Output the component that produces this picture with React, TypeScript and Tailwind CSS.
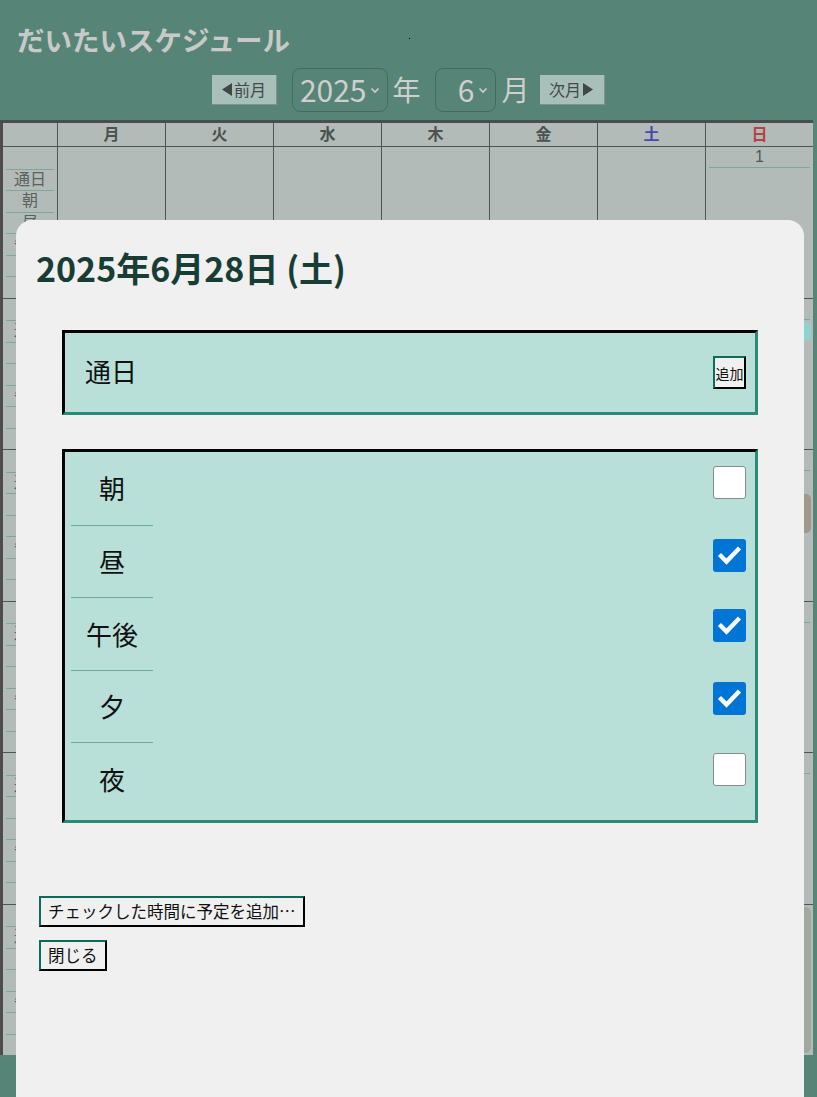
import React from "react";

const weeks: (number | null)[][] = [
  [null, null, null, null, null, null, 1],
  [2, 3, 4, 5, 6, 7, 8],
  [9, 10, 11, 12, 13, 14, 15],
  [16, 17, 18, 19, 20, 21, 22],
  [23, 24, 25, 26, 27, 28, 29],
  [30, null, null, null, null, null, null],
];

const dayNames = [
  { t: "月", c: "text-[#4b524f]" },
  { t: "火", c: "text-[#4b524f]" },
  { t: "水", c: "text-[#4b524f]" },
  { t: "木", c: "text-[#4b524f]" },
  { t: "金", c: "text-[#4b524f]" },
  { t: "土", c: "text-[#4a48b0]" },
  { t: "日", c: "text-[#b04545]" },
];

const slotLabels = ["", "通日", "朝", "昼", "午後", "夕", "夜"];

function Chevron() {
  return (
    <svg width="10" height="7" viewBox="0 0 10 7" className="ml-[3px] mt-[1px]">
      <path d="M1.5 1.5 L5 5 L8.5 1.5" fill="none" stroke="#cfcfcf" strokeWidth="1.6" />
    </svg>
  );
}

function NavButton({ label, dir }: { label: string; dir: "l" | "r" }) {
  const tri = (
    <svg width="12" height="15" viewBox="0 0 12 15">
      {dir === "l" ? <path d="M11 1 L1 7.5 L11 14 Z" fill="#3f4845" /> : <path d="M1 1 L11 7.5 L1 14 Z" fill="#3f4845" />}
    </svg>
  );
  return (
    <div className="flex h-[30px] w-[65px] items-center justify-center gap-[1px] border-b border-r border-[#7f928d] bg-[#a9bfba] text-[16px] leading-none text-[#414a47]">
      {dir === "l" && tri}
      <span className="pb-[1px]">{label}</span>
      {dir === "r" && tri}
    </div>
  );
}

function Select({ value, w }: { value: string; w: string }) {
  return (
    <div className={`flex h-[44px] ${w} items-center justify-end rounded-[8px] border border-[#46695f] pr-[7px] text-[30px] leading-none text-[#cfcfcf]`}>
      <span className="pb-[3px]">{value}</span>
      <Chevron />
    </div>
  );
}

function DayCell({ day, wi, di }: { day: number | null; wi: number; di: number }) {
  const isSun = di === 6;
  const visible = isSun || wi === 0;
  return (
    <div className="flex h-full flex-col border-l border-[#4f5553]">
      {wi === 5 && isSun ? (
        <div className="m-[2px] flex-1 rounded-[6px] bg-[#a3a89f]" />
      ) : day !== null ? (
        <>
          <div className="mx-[3px] h-[21px] border-b border-[#7aa89a] text-center font-['Liberation_Sans','Noto_Sans_CJK_JP',sans-serif] text-[16px] leading-[19px] text-[#4f5753]">
            {visible ? day : ""}
          </div>
          {wi === 1 && isSun && <div className="ml-[2px] mr-[2px] mt-[2px] h-[19px] rounded-[5px] bg-[#8dd3cf]" />}
          {wi === 2 && isSun && <div className="ml-[2px] mr-[2px] mt-[23px] h-[39px] rounded-[5px] bg-[#a0978d]" />}
        </>
      ) : null}
    </div>
  );
}

function Check({ checked }: { checked: boolean }) {
  if (!checked) {
    return <div className="h-[33px] w-[33px] rounded-[3px] border border-[#8a8a8a] bg-white" />;
  }
  return (
    <div className="flex h-[33px] w-[33px] items-center justify-center rounded-[3px] bg-[#0075d5]">
      <svg width="33" height="33" viewBox="0 0 33 33">
        <path d="M8 17 L13.5 22.5 L25 10.5" fill="none" stroke="white" strokeWidth="4.4" strokeLinecap="square" strokeLinejoin="miter" />
      </svg>
    </div>
  );
}

function OutsetButton({ children, className }: { children: React.ReactNode; className?: string }) {
  return (
    <div
      className={`inline-flex items-center justify-center border-2 border-t-[#0d6b5a] border-l-[#0d6b5a] border-r-black border-b-black bg-[#f0f0f0] text-[#111] ${className ?? ""}`}
    >
      {children}
    </div>
  );
}

export default function App() {
  const slots = [
    { t: "朝", c: false },
    { t: "昼", c: true },
    { t: "午後", c: true },
    { t: "夕", c: true },
    { t: "夜", c: false },
  ];
  return (
    <div className="relative h-[1097px] w-[817px] overflow-hidden bg-[#568578] font-['Noto_Sans_CJK_JP',sans-serif]">
      {/* header */}
      <div className="relative pl-[17px] pt-[18px]">
        <h1 className="text-[27.5px] font-bold leading-[42px] text-[#c9c9c9]">だいたいスケジュール</h1>
        <div className="absolute left-[409px] top-[38px] h-[1px] w-[1px] bg-black" />
      </div>
      <div className="mt-[8px] flex h-[44px] items-center justify-center pr-[1px]">
        <NavButton label="前月" dir="l" />
        <div className="ml-[15px]">
          <Select value="2025" w="w-[96px]" />
        </div>
        <span className="mb-[3px] ml-[5px] mr-[14px] w-[28px] text-[28px] leading-none text-[#cfcfcf]">年</span>
        <Select value="6" w="w-[61px]" />
        <span className="mb-[3px] ml-[6px] mr-[10px] w-[28px] text-[28px] leading-none text-[#cfcfcf]">月</span>
        <NavButton label="次月" dir="r" />
      </div>

      {/* calendar */}
      <div className="mt-[8px] w-[813px] border-l-[3px] border-t-[3px] border-[#4c4c4c] bg-[#b3bbb8]">
        <div className="grid h-[23px] grid-cols-[54px_repeat(7,108px)]">
          <div />
          {dayNames.map((d) => (
            <div key={d.t} className={`border-l border-[#4f5553] text-center text-[16px] font-bold leading-[21px] ${d.c}`}>
              {d.t}
            </div>
          ))}
        </div>
        {weeks.map((w, wi) => (
          <div key={wi} className="grid h-[151.5px] grid-cols-[54px_repeat(7,108px)] border-t border-[#4f5553]">
            <div className="flex flex-col">
              {slotLabels.map((s, si) => (
                <div
                  key={si}
                  className={`mx-[3px] h-[21.5px] text-center font-['Liberation_Sans','Noto_Sans_CJK_JP',sans-serif] text-[16px] leading-[20px] text-[#5a625e] ${si > 0 ? "border-t border-[#7aa89a]" : ""}`}
                >
                  {s}
                </div>
              ))}
            </div>
            {w.map((d, di) => (
              <DayCell key={di} day={d} wi={wi} di={di} />
            ))}
          </div>
        ))}
      </div>

      {/* modal */}
      <div className="absolute left-[16px] top-[220px] h-[877px] w-[788px] rounded-t-[16px] bg-[#f0f0f0] px-[20px] pt-[24px]">
        <h2 className="text-[34px] font-bold leading-[48px] text-[#173d35]">2025年6月28日 (土)</h2>

        <div className="mx-[26px] mt-[38px] flex h-[85px] items-center justify-between border-[3px] border-b-[#2e8a78] border-l-black border-r-[#2e8a78] border-t-black bg-[#b8e0d9] pl-[20px] pr-[9px]">
          <span className="mb-[3px] text-[26px] leading-none text-[#111]">通日</span>
          <OutsetButton className="h-[33px] w-[33px] text-[14px] leading-none">追加</OutsetButton>
        </div>

        <div className="mx-[26px] mt-[34px] h-[374px] border-[3px] border-b-[#2e8a78] border-l-black border-r-[#2e8a78] border-t-black bg-[#b8e0d9] pl-[6px] pr-[9px]">
          {slots.map((s, i) => (
            <div key={s.t} className="flex h-[72.5px] items-start justify-between">
              <div
                className={`flex h-full w-[82px] items-center justify-center text-[26px] leading-none text-[#111] ${i > 0 ? "border-t border-[#6aa898]" : ""}`}
              >
                {s.t}
              </div>
              <div className={i < 2 ? "pt-[14px]" : i < 4 ? "pt-[12px]" : "pt-[11px]"}>
                <Check checked={s.c} />
              </div>
            </div>
          ))}
        </div>

        <div className="ml-[3px] mt-[73px] flex flex-col items-start gap-[13px]">
          <OutsetButton className="h-[31px] px-[7px] text-[16.5px] leading-none">チェックした時間に予定を追加…</OutsetButton>
          <OutsetButton className="h-[31px] px-[7px] text-[16.5px] leading-none">閉じる</OutsetButton>
        </div>
      </div>
    </div>
  );
}
